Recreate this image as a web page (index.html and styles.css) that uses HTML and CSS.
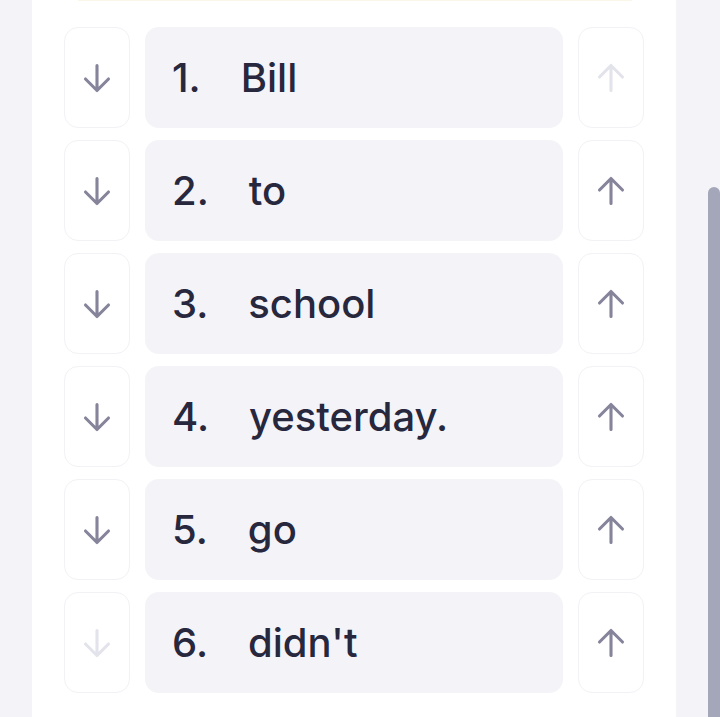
FILE: index.html
```html
<!DOCTYPE html>
<html lang="en">

<head>
    <meta charset="UTF-8">
    <meta name="viewport" content="width=device-width, initial-scale=1.0">
    <title>Order the words</title>
    <link rel="stylesheet" href="styles.css">
</head>

<body>
    <div class="gutter"></div>
    <div class="panel">
        <div class="edge"></div>
        <div class="word-list">
            <div class="row">
                <button class="move down"><svg viewBox="-2 -2 30 30"><path d="M13 0.5v25 M1.5 14l11.5 11.5 11.5-11.5"/></svg></button>
                <div class="word"><span class="num">1.</span><span>Bill</span></div>
                <button class="move up off"><svg viewBox="-2 -2 30 30"><path d="M13 25.5v-25 M1.5 12l11.5-11.5 11.5 11.5"/></svg></button>
            </div>
            <div class="row">
                <button class="move down"><svg viewBox="-2 -2 30 30"><path d="M13 0.5v25 M1.5 14l11.5 11.5 11.5-11.5"/></svg></button>
                <div class="word"><span class="num">2.</span><span>to</span></div>
                <button class="move up"><svg viewBox="-2 -2 30 30"><path d="M13 25.5v-25 M1.5 12l11.5-11.5 11.5 11.5"/></svg></button>
            </div>
            <div class="row">
                <button class="move down"><svg viewBox="-2 -2 30 30"><path d="M13 0.5v25 M1.5 14l11.5 11.5 11.5-11.5"/></svg></button>
                <div class="word"><span class="num">3.</span><span>school</span></div>
                <button class="move up"><svg viewBox="-2 -2 30 30"><path d="M13 25.5v-25 M1.5 12l11.5-11.5 11.5 11.5"/></svg></button>
            </div>
            <div class="row">
                <button class="move down"><svg viewBox="-2 -2 30 30"><path d="M13 0.5v25 M1.5 14l11.5 11.5 11.5-11.5"/></svg></button>
                <div class="word"><span class="num">4.</span><span>yesterday.</span></div>
                <button class="move up"><svg viewBox="-2 -2 30 30"><path d="M13 25.5v-25 M1.5 12l11.5-11.5 11.5 11.5"/></svg></button>
            </div>
            <div class="row">
                <button class="move down"><svg viewBox="-2 -2 30 30"><path d="M13 0.5v25 M1.5 14l11.5 11.5 11.5-11.5"/></svg></button>
                <div class="word"><span class="num">5.</span><span>go</span></div>
                <button class="move up"><svg viewBox="-2 -2 30 30"><path d="M13 25.5v-25 M1.5 12l11.5-11.5 11.5 11.5"/></svg></button>
            </div>
            <div class="row">
                <button class="move down off"><svg viewBox="-2 -2 30 30"><path d="M13 0.5v25 M1.5 14l11.5 11.5 11.5-11.5"/></svg></button>
                <div class="word"><span class="num">6.</span><span>didn't</span></div>
                <button class="move up"><svg viewBox="-2 -2 30 30"><path d="M13 25.5v-25 M1.5 12l11.5-11.5 11.5 11.5"/></svg></button>
            </div>
        </div>
    </div>
    <div class="track">
        <div class="thumb"></div>
    </div>
</body>

</html>
```

FILE: styles.css
```css
html,
body {
    height: 100%;
}

body {
    margin: 0;
    display: flex;
    background-color: #f3f3f8;
    font-family: Inter, 'Noto Sans', sans-serif;
    color: #27273d;
    overflow: hidden;
}

.gutter {
    width: 32px;
    flex: none;
}

.panel {
    width: 644px;
    flex: none;
    background-color: #ffffff;
    padding: 0 32px;
    box-sizing: border-box;
}

/* bottom edge of the card above, cut off by the scroll */
.edge {
    height: 1px;
    margin: 0 12px 26px 14px;
    background-color: #fcf6e8;
}

.word-list {
    display: flex;
    flex-direction: column;
    gap: 12px;
}

.row {
    display: flex;
    gap: 15px;
    height: 101px;
}

.move {
    width: 66px;
    flex: none;
    padding: 0;
    display: flex;
    align-items: center;
    justify-content: center;
    background-color: #ffffff;
    border: 1.5px solid #f2f2f6;
    border-radius: 14px;
    color: #85849a;
}

.move.off {
    color: #e3e3eb;
}

.move svg {
    width: 30px;
    height: 30px;
    fill: none;
    stroke: currentColor;
    stroke-width: 3.1;
    stroke-linecap: round;
    stroke-linejoin: round;
}

.word {
    flex: 1;
    display: flex;
    align-items: center;
    padding-left: 27px;
    background-color: #f3f3f8;
    border-radius: 14px;
    font-size: 40px;
    font-weight: 500;
}

.num {
    margin-right: 40px;
}

.track {
    flex: 1;
    display: flex;
    justify-content: flex-end;
    padding-top: 187px;
}

.thumb {
    width: 12px;
    background-color: #a4a7ba;
    border-radius: 6px 6px 0 0;
}
```
